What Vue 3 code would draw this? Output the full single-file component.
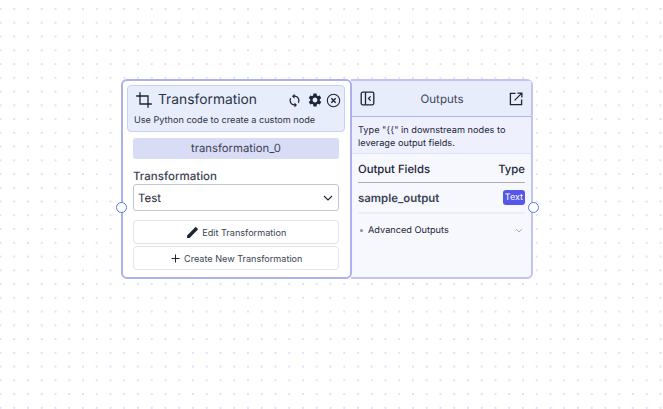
<script setup>
import { ref } from 'vue';

const nodeName = ref('transformation_0');
const selected = ref('Test');
</script>

<template>
  <div class="canvas">
    <div class="node">
      <div class="main">
        <span class="handle handle-in"></span>
        <div class="head">
          <div class="head-top">
            <svg class="crop" width="16" height="16" viewBox="0 0 16 16" fill="none" stroke="#1c2536" stroke-width="1.3">
              <path d="M4 0.2V12H15.8" />
              <path d="M0.2 4H12V15.8" />
            </svg>
            <span class="title">Transformation</span>
            <div class="head-icons">
              <svg width="15" height="15" viewBox="0 0 24 24" fill="#1c2536">
                <path d="M12 4V1L8 5l4 4V6c3.31 0 6 2.69 6 6 0 1.01-.25 1.97-.7 2.8l1.46 1.46C19.54 15.03 20 13.57 20 12c0-4.42-3.58-8-8-8zm0 14c-3.31 0-6-2.69-6-6 0-1.01.25-1.97.7-2.8L5.24 7.74C4.46 8.97 4 10.43 4 12c0 4.42 3.58 8 8 8v3l4-4-4-4v3z" />
              </svg>
              <svg class="gear" width="16" height="16" viewBox="0 0 24 24" fill="#1c2536">
                <path d="M19.14 12.94c.04-.3.06-.61.06-.94 0-.32-.02-.64-.07-.94l2.03-1.58c.18-.14.23-.41.12-.61l-1.92-3.32c-.12-.22-.37-.29-.59-.22l-2.39.96c-.5-.38-1.03-.7-1.62-.94l-.36-2.54c-.04-.24-.24-.41-.48-.41h-3.84c-.24 0-.43.17-.47.41l-.36 2.54c-.59.24-1.13.57-1.62.94l-2.39-.96c-.22-.08-.47 0-.59.22L2.74 8.87c-.12.21-.08.47.12.61l2.03 1.58c-.05.3-.09.63-.09.94s.02.64.07.94l-2.03 1.58c-.18.14-.23.41-.12.61l1.92 3.32c.12.22.37.29.59.22l2.39-.96c.5.38 1.03.7 1.62.94l.36 2.54c.05.24.24.41.48.41h3.84c.24 0 .44-.17.47-.41l.36-2.54c.59-.24 1.13-.56 1.62-.94l2.39.96c.22.08.47 0 .59-.22l1.92-3.32c.12-.22.07-.47-.12-.61l-2.01-1.58zM12 15.6c-1.98 0-3.6-1.62-3.6-3.6s1.62-3.6 3.6-3.6 3.6 1.62 3.6 3.6-1.62 3.6-3.6 3.6z" />
              </svg>
              <svg width="15" height="15" viewBox="0 0 15 15" fill="none" stroke="#1c2536" stroke-width="1.1">
                <circle cx="7.5" cy="7.5" r="6.2" />
                <path d="M5.3 5.3l4.4 4.4M9.7 5.3l-4.4 4.4" stroke-width="1.4" />
              </svg>
            </div>
          </div>
          <p class="desc">Use Python code to create a custom node</p>
        </div>
        <div class="body">
          <div class="name-pill">{{ nodeName }}</div>
          <label class="field-label">Transformation</label>
          <div class="select">
            <span>{{ selected }}</span>
            <svg width="10" height="6" viewBox="0 0 10 6" fill="none" stroke="#1c2536" stroke-width="1.1">
              <path d="M1 1l4 4 4-4" />
            </svg>
          </div>
          <div class="actions">
            <button class="btn">
              <svg width="13" height="13" viewBox="0 0 24 24" fill="#1c2536">
                <path d="M2 17.5V22h4.5L19.8 8.7l-4.5-4.5L2 17.5zM21.6 6.9c.5-.5.5-1.2 0-1.7l-2.8-2.8c-.5-.5-1.2-.5-1.7 0l-2.2 2.2 4.5 4.5 2.2-2.2z" />
              </svg>
              Edit Transformation
            </button>
            <button class="btn">
              <svg width="11" height="11" viewBox="0 0 11 11" fill="none" stroke="#1c2536" stroke-width="1">
                <path d="M5.5 1.5v8M1.5 5.5h8" />
              </svg>
              Create New Transformation
            </button>
          </div>
        </div>
      </div>
      <div class="outputs">
        <span class="handle handle-out"></span>
        <div class="out-head">
          <svg width="15" height="15" viewBox="0 0 15 15" fill="none" stroke="#1c2536" stroke-width="1.3">
            <rect x="1.2" y="1.2" width="12.6" height="12.6" rx="1.5" />
            <path d="M5.5 1.2v12.6" />
            <path d="M10.6 5.4L8.5 7.5l2.1 2.1" />
          </svg>
          <span>Outputs</span>
          <svg width="14" height="14" viewBox="0 0 15 15" fill="none" stroke="#1c2536" stroke-width="1.4">
            <path d="M7 1.5H1.5v12h12V8" />
            <path d="M6 9l7.5-7.5M9 1.2h4.8V6" />
          </svg>
        </div>
        <p class="out-note">Type "{{ '{{' }}" in downstream nodes to leverage output fields.</p>
        <div class="out-body">
          <div class="out-cols">
            <span>Output Fields</span>
            <span>Type</span>
          </div>
          <div class="out-row">
            <span>sample_output</span>
            <span class="tag">Text</span>
          </div>
          <div class="advanced">
            <span class="dot"></span>
            <span class="adv-label">Advanced Outputs</span>
            <svg width="8" height="5" viewBox="0 0 8 5" fill="none" stroke="#a9aeb8" stroke-width="1">
              <path d="M1 1l3 3 3-3" />
            </svg>
          </div>
        </div>
      </div>
    </div>
  </div>
</template>

<style scoped>
.canvas {
  position: relative;
  width: 663px;
  height: 409px;
  overflow: hidden;
  background-color: #fff;
  background-image: radial-gradient(circle at center, #d6d8f4 0.6px, transparent 1px);
  background-size: 13.75px 13.75px;
  background-position: -6.4px 2.2px;
  font-family: Inter, "Liberation Sans", sans-serif;
  color: #1c2536;
  text-rendering: geometricPrecision;
}

.node {
  position: absolute;
  left: 121px;
  top: 79px;
  display: flex;
}

.main {
  position: relative;
  z-index: 1;
  box-sizing: border-box;
  width: 231px;
  height: 200px;
  padding: 4px 5px 4px 4px;
  background: #fff;
  border: 2px solid #adb0ef;
  border-radius: 6px;
}

.head {
  box-sizing: border-box;
  height: 47px;
  padding: 2px 3px 0 5px;
  background: #e8edfc;
  border: 1px solid #c9d0f5;
  border-radius: 4px;
}

.head-top {
  display: flex;
  align-items: center;
  height: 24px;
}

.crop {
  flex: none;
  margin-left: 3px;
}

.title {
  flex: 1;
  margin-left: 6px;
  font-size: 13.8px;
  font-weight: 400;
  color: #2b3344;
}

.head-icons {
  display: flex;
  align-items: center;
  gap: 3px;
}

.gear {
  margin-left: 2px;
}

.desc {
  margin: 3px 0 0 1px;
  font-size: 9.15px;
  white-space: nowrap;
  color: #2b3344;
}

.body {
  padding: 6px 6px 0;
}

.name-pill {
  height: 21px;
  line-height: 21px;
  text-align: center;
  font-size: 11.3px;
  background: #d9dcf5;
  border-radius: 3px;
  color: #3b4354;
}

.field-label {
  display: block;
  margin-top: 10px;
  font-size: 11.5px;
  font-weight: 500;
  line-height: 14px;
  color: #3b4354;
}

.select {
  box-sizing: border-box;
  display: flex;
  align-items: center;
  justify-content: space-between;
  height: 27px;
  margin-top: 1px;
  padding: 0 5px 0 4px;
  font-size: 11.5px;
  background: #fff;
  border: 1px solid #c4c6cc;
  border-radius: 3px;
}

.actions {
  display: flex;
  flex-direction: column;
  gap: 2px;
  margin-top: 9px;
}

.btn {
  display: flex;
  align-items: center;
  justify-content: center;
  gap: 3.5px;
  box-sizing: border-box;
  height: 24px;
  padding: 0;
  font-family: inherit;
  font-size: 9.1px;
  color: #3b4354;
  background: #fff;
  border: 1px solid #e2e4e8;
  border-radius: 4px;
}

.outputs {
  position: relative;
  box-sizing: border-box;
  width: 182px;
  height: 200px;
  margin-left: -1px;
  background: #f7f8fe;
  border: 2px solid #c1c3f3;
  border-left: none;
  border-radius: 0 6px 6px 0;
}

.out-head {
  display: flex;
  align-items: center;
  justify-content: space-between;
  height: 35px;
  padding: 0 8px 0 9px;
  font-size: 11.5px;
  color: #3b4354;
  background: #e8edfc;
  border-bottom: 1px solid #b0b3ee;
}

.out-note {
  margin: 0;
  padding: 7px 6px 3px 7px;
  font-size: 9.2px;
  line-height: 13px;
  background: #eef1fd;
  border-bottom: 1px solid #dfe3f8;
}

.out-body {
  padding: 0 6px 0 7px;
}

.out-cols {
  display: flex;
  justify-content: space-between;
  align-items: center;
  height: 26px;
  padding-top: 2px;
  font-size: 11.3px;
  font-weight: 500;
  border-bottom: 1px solid #a9acb4;
}

.out-row {
  display: flex;
  justify-content: space-between;
  align-items: center;
  height: 29px;
  font-size: 11.4px;
  font-weight: 600;
  color: #3b4354;
  border-bottom: 2px solid #eceef3;
}

.tag {
  padding: 1.5px 2px;
  font-size: 9px;
  font-weight: 400;
  line-height: 12px;
  color: #fff;
  background: #5457e8;
  border-radius: 3px;
}

.advanced {
  display: flex;
  align-items: center;
  height: 32px;
  padding: 0 2px;
  font-size: 9.2px;
}

.dot {
  width: 3px;
  height: 3px;
  margin-right: 5px;
  background: #8a8f9a;
  border-radius: 50%;
}

.adv-label {
  flex: 1;
}

.handle {
  position: absolute;
  z-index: 2;
  box-sizing: border-box;
  width: 11px;
  height: 11px;
  background: #fff;
  border: 1.5px solid #4a7cf0;
  border-radius: 50%;
}

.handle-in {
  left: -7px;
  top: 121px;
}

.handle-out {
  right: -8px;
  top: 121px;
}
</style>
